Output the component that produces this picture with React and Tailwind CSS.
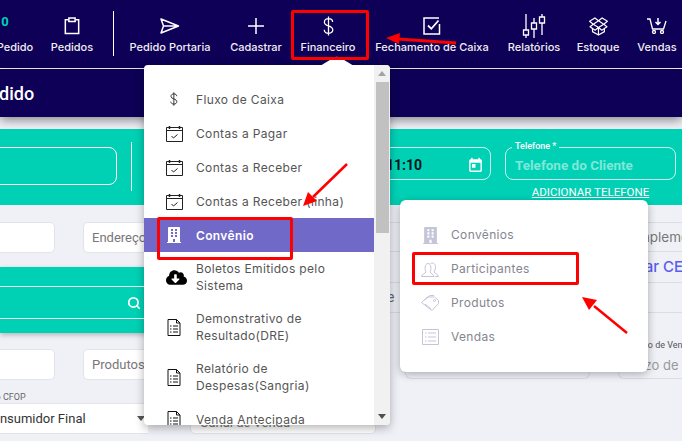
import { Search } from "lucide-react"
import { FaBuilding, FaCloudDownloadAlt } from "react-icons/fa"
import { MdToday } from "react-icons/md"
import { SlSocialDropbox } from "react-icons/sl"

const poppins = "font-['Inter',sans-serif]"

function ClipboardIcon() {
  return (
    <svg width="16" height="18" viewBox="0 0 18 20" fill="none" stroke="white" strokeWidth="1.7">
      <path d="M5 3H1.500v15.500h15V3H13" />
      <path d="M5.500 1h7v4h-7z" />
    </svg>
  )
}

function SendIcon() {
  return (
    <svg width="20" height="16" viewBox="0 0 20 16" fill="none" stroke="white" strokeWidth="1.5">
      <path d="M1 1l17.500 7L1 15l2.500-7zM3.500 8h15" strokeLinejoin="round" />
    </svg>
  )
}

function PlusIcon() {
  return (
    <svg width="18" height="18" viewBox="0 0 18 18" stroke="white" strokeWidth="1.5">
      <path d="M9 1v16M1 9h16" />
    </svg>
  )
}

function DollarIcon({ color = "white", size = 20 }) {
  return (
    <svg width={size * 0.55} height={size} viewBox="0 0 12 22" fill="none" stroke={color} strokeWidth="1.4">
      <path d="M6 0.500v21M10.500 6.500C10.500 4 8.500 3 6 3S1.500 4.300 1.500 6.800C1.500 12 10.700 9.800 10.700 15.200 10.700 17.800 8.500 19 6 19S1.300 17.800 1.300 15.200" />
    </svg>
  )
}

function CheckSquareIcon() {
  return (
    <svg width="18" height="18" viewBox="0 0 18 18" fill="none" stroke="white">
      <path d="M16.500 7v10H1V1h15" strokeWidth="1.500" />
      <path d="M5 8.500l3.300 3.300L15.500 3.500" strokeWidth="1.800" />
    </svg>
  )
}

function SlidersIcon() {
  return (
    <svg width="24" height="24" viewBox="0 0 24 24" fill="none" stroke="white" strokeWidth="1.300">
      <path d="M4 0v16M4 21v3M12 4v5M12 15v9M20 0v3M20 9v12" />
      <path d="M1.500 16h5v5h-5zM9.500 9h5v6h-5zM17.500 3h5v6h-5z" />
    </svg>
  )
}

function CartIcon() {
  return (
    <svg width="20" height="16" viewBox="0 0 20 16" fill="none" stroke="white" strokeWidth="1.300">
      <path d="M0 1h3l2.500 10h11L19 3" />
      <path d="M11 0v6M8.500 4l2.500 2.500L13.500 4" strokeWidth="1.500" />
      <circle cx="7" cy="14" r="1.500" />
      <circle cx="15" cy="14" r="1.500" />
    </svg>
  )
}

function CalendarCheckIcon() {
  return (
    <svg width="17" height="17" viewBox="0 0 17 17" fill="none" stroke="#222" strokeWidth="1">
      <path d="M0.500 2.500h16v14H0.500zM0.500 5.500h16" />
      <path d="M3.500 1v3M13.500 1v3" strokeWidth="1.500" />
      <path d="M5.500 11l2 2 4-3.500" />
    </svg>
  )
}

function DocListIcon() {
  return (
    <svg width="14" height="17" viewBox="0 0 14 17" fill="none" stroke="#111" strokeWidth="1">
      <path d="M1 0.500h8.500l3.500 3.500v12.500H1z" />
      <path d="M9.500 0.500v3.500H13" />
      <path d="M3 7h1.500M6 7h5M3 10h1.500M6 10h5M3 13h1.500M6 13h5" strokeWidth="1.200" />
    </svg>
  )
}

function PeopleIcon() {
  return (
    <svg width="18" height="15" viewBox="0 0 18 15" fill="none" stroke="#c5c5d8" strokeWidth="1">
      <path d="M0.500 14.500c0-2.500 4-3 4.500-4.500C3.500 8 3.500 1.500 7 1.500S10.500 8 9 10c.5 1.500 3.500 2 4 4.500z" />
      <path d="M9.500 1.500c3-1.500 5.500 1 5 4.500-.2 1.600-1 3-1.500 4 .5 1.500 4 2 4.500 4.500H14" />
    </svg>
  )
}

function TagIcon() {
  return (
    <svg width="18" height="16" viewBox="0 0 18 16" fill="none" stroke="#c5c5d8" strokeWidth="1">
      <path d="M0.500 7.500L6.500 2h7l4 3.500v3L11 15.500z" />
      <path d="M3.500 5L9 0.500h4M4 9l6 5" />
      <circle cx="13.500" cy="5.500" r="1" />
    </svg>
  )
}

function ListBoxIcon() {
  return (
    <svg width="17" height="16" viewBox="0 0 17 16" fill="none" stroke="#c5c5d8" strokeWidth="1">
      <path d="M0.500 0.500h16v15H0.500z" />
      <path d="M3 4h1.500M6 4h8M3 8h1.500M6 8h8M3 12h1.500M6 12h8" />
    </svg>
  )
}

function NavItem({ icon, label, width }) {
  return (
    <div className={`flex flex-col items-center shrink-0 ${width}`}>
      <div className="h-[24px] flex items-center justify-center">{icon}</div>
      <span className={`mt-[1px] text-[11px] leading-[16px] whitespace-nowrap font-medium text-[#f1eef0] ${poppins}`}>{label}</span>
    </div>
  )
}

function MenuItem({ icon, lines, active }) {
  return (
    <div className={`flex items-center pl-[16px] ${active ? "bg-[#7069c7] text-white font-semibold" : "text-[#555]"} ${lines.length > 1 ? "h-[50px]" : "h-[34px]"}`}>
      <div className="w-[28px] flex justify-center shrink-0">{icon}</div>
      <div className={`ml-[8px] text-[12px] leading-[17px] tracking-[0.35px] ${poppins}`}>
        {lines.map((line) => (
          <div key={line} className="whitespace-nowrap">{line}</div>
        ))}
      </div>
    </div>
  )
}

function SubItem({ icon, label }) {
  return (
    <div className="h-[34px] flex items-center pl-[20px]">
      <div className="w-[20px] flex justify-center shrink-0">{icon}</div>
      <span className={`ml-[11px] text-[12px] tracking-[0.35px] text-[#85858f] ${poppins}`}>{label}</span>
    </div>
  )
}

function Field({ className, children }) {
  return (
    <div className={`h-[31px] bg-white border border-[#e3e3ea] rounded-[5px] flex items-center px-[8px] whitespace-nowrap overflow-hidden shrink-0 ${className}`}>
      {children}
    </div>
  )
}

function App() {
  return (
    <div className="relative w-[682px] h-[441px] overflow-hidden bg-[#f0f1f7] font-['Roboto',sans-serif]">

      {/* TOP NAV */}
      <div className="h-[69px] bg-[#0d0056] border-b border-white flex pt-[14px] relative">
        <div className="flex ml-[-15px]">
          <NavItem
            width="w-[60px]"
            label="Pedido"
            icon={<span className="text-[#00d1b5] text-[13px] font-bold translate-x-[-10px] translate-y-[-4px]">0</span>}
          />
          <NavItem width="w-[54px]" label="Pedidos" icon={<ClipboardIcon />} />
          <div className="w-[28px] flex justify-center shrink-0 -mt-[3px]">
            <div className="w-px h-[45px] bg-white" />
          </div>
          <NavItem width="w-[86px]" label="Pedido Portaria" icon={<SendIcon />} />
          <NavItem width="w-[86px]" label="Cadastrar" icon={<PlusIcon />} />
          <NavItem width="w-[58px]" label="Financeiro" icon={<DollarIcon />} />
          <NavItem width="w-[150px]" label="Fechamento de Caixa" icon={<CheckSquareIcon />} />
          <NavItem width="w-[54px]" label="Relatórios" icon={<SlidersIcon />} />
          <NavItem width="w-[74px]" label="Estoque" icon={<SlSocialDropbox className="text-white" size={19} />} />
          <NavItem width="w-[44px]" label="Vendas" icon={<CartIcon />} />
        </div>
      </div>

      {/* TITLE BAR */}
      <div className="relative z-10 h-[48px] bg-[#0d0056] flex items-center shadow-[0_3px_10px_rgba(0,0,0,0.45)]">
        <span className="ml-[-22px] text-[18px] font-medium text-white">Pedido</span>
      </div>

      {/* TEAL HEADER */}
      <div className="mt-[12px] h-[76px] bg-[#00d1b5] flex items-start relative">
        <div className="mt-[18px] ml-[-20px] w-[137px] h-[38px] border border-white rounded-[8px] shrink-0" />
        <div className="mt-[13px] ml-[14px] w-px h-[49px] bg-white shrink-0" />
        <div className="mt-[18px] ml-[13px] w-[346px] h-[33px] border border-white/80 rounded-[8px] shrink-0 flex items-center justify-end pr-[6px] pt-[3px]">
          <span className="text-[14px] font-bold text-[#07151a] mr-[45px]">11:10</span>
          <MdToday className="text-white" size={17} />
        </div>
        <div className="ml-[14px] shrink-0 flex flex-col items-center">
          <div className="mt-[18px] w-[171px] h-[33px] border border-white/80 rounded-[8px] flex items-center pl-[9px] pt-[3px] relative">
            <span className="absolute -top-[8px] left-[6px] px-[3px] bg-[#00d1b5] text-[9px] leading-[12px] font-medium text-white">Telefone *</span>
            <span className="text-[13.500px] font-bold text-[#7fe8da]">Telefone do Cliente</span>
          </div>
          <span className="mt-[5px] text-[11.500px] leading-[14px] text-white underline">ADICIONAR TELEFONE</span>
        </div>
      </div>

      {/* BODY */}
      <div className="flex mt-[17px]">

        {/* LEFT COLUMN */}
        <div className="w-[376px] shrink-0">
          <div className="flex">
            <Field className="ml-[-30px] w-[85px]" />
            <Field className="ml-[28px] w-[250px] text-[13px] text-[#777]">Endereço</Field>
          </div>

          <div className="mt-[14px] h-[66px] bg-[#00d1b5] pt-[19px] shadow-[0_2px_5px_rgba(0,0,0,0.25)]">
            <div className="h-[33px] border-y border-white/90 flex items-center pl-[127px]">
              <Search className="text-white" size={14} strokeWidth={3} />
            </div>
          </div>

          <div className="flex mt-[16px]">
            <Field className="ml-[-30px] w-[85px]" />
            <Field className="ml-[28px] w-[250px] text-[13px] text-[#777]">Produtos</Field>
          </div>

          <div className="flex mt-[23px]">
            <div className="relative shrink-0">
              <span className="absolute -top-[11px] left-[-17px] text-[9px] leading-[10px] text-[#666] whitespace-nowrap">Tipo CFOP</span>
              <Field className="ml-[-26px] w-[174px] rounded-none border-x-0 pl-[10px] text-[13px] text-[#333]">Consumidor Final</Field>
              <svg className="absolute right-[3px] top-[13px]" width="8" height="5" viewBox="0 0 8 5"><path d="M0 0h8L4 5z" fill="#555" /></svg>
            </div>
            <Field className="ml-[42px] w-[186px] pt-[8px] pl-[9px] text-[13px] text-[#777]">Canal de Venda</Field>
          </div>
        </div>

        {/* RIGHT COLUMN */}
        <div className="flex-1 min-w-0">
          <div className={`ml-[4px] h-[30px] border-y border-[#dcdce4] flex items-center whitespace-nowrap overflow-hidden text-[13.500px] text-[#777] ${poppins}`}>
            <span className="ml-[240px]">Complemento</span>
          </div>
          <div className={`ml-[4px] h-[31px] border-b border-[#dcdce4] flex items-center whitespace-nowrap overflow-hidden text-[15px] font-medium text-[#5a5cf0] ${poppins}`}>
            <span className="ml-[229px]">Buscar CEP</span>
          </div>
          <div className="ml-[4px] h-[30px] border-b border-[#dcdce4] flex items-center text-[14px] text-[#667] overflow-hidden relative">
            <span className="ml-[7px]">e</span>
            <span className="ml-[250px] w-[2px] h-[5px] bg-[#5a5cf0]/70" />
          </div>
          <div className="flex">
            <div className="ml-[29px] w-[185px] h-[66px] border-b border-x border-[#dcdce4] rounded-b-[6px] shrink-0" />
            <div className="ml-[28px] flex-1 h-[66px] border-b border-l border-[#dcdce4] rounded-bl-[6px] pl-[5px] pt-[27px] whitespace-nowrap overflow-hidden text-[#999]">
              <div className="ml-[6px] text-[9px] leading-[10px] text-[#555]">Prazo de Venda</div>
              <div className={`mt-[5px] text-[13px] leading-[20px] ${poppins}`}>Prazo de Venda</div>
            </div>
          </div>
        </div>
      </div>

      {/* FINANCEIRO DROPDOWN */}
      <div className="absolute left-[144px] top-[65px] w-[246px] h-[360px] bg-white rounded-[4px] overflow-hidden shadow-[0_3px_10px_rgba(0,0,0,0.3)] flex z-20">
        <div className="flex-1 pt-[17px]">
          <MenuItem icon={<DollarIcon color="#222" size={14} />} lines={["Fluxo de Caixa"]} />
          <MenuItem icon={<CalendarCheckIcon />} lines={["Contas a Pagar"]} />
          <MenuItem icon={<CalendarCheckIcon />} lines={["Contas a Receber"]} />
          <MenuItem icon={<CalendarCheckIcon />} lines={["Contas a Receber (linha)"]} />
          <MenuItem icon={<FaBuilding className="text-white" size={16} />} lines={["Convênio"]} active />
          <MenuItem icon={<FaCloudDownloadAlt className="text-black ml-[5px]" size={21} />} lines={["Boletos Emitidos pelo", "Sistema"]} />
          <MenuItem icon={<DocListIcon />} lines={["Demonstrativo de", "Resultado(DRE)"]} />
          <MenuItem icon={<DocListIcon />} lines={["Relatório de", "Despesas(Sangria)"]} />
          <MenuItem icon={<DocListIcon />} lines={["Venda Antecipada"]} />
        </div>
        <div className="w-[16px] bg-[#f1f1f1] flex flex-col items-center shrink-0 relative">
          <svg className="mt-[6px]" width="8" height="5" viewBox="0 0 8 5"><path d="M0 5h8L4 0z" fill="#a3a3a3" /></svg>
          <div className="mt-[6px] w-[13px] h-[151px] bg-[#c1c1c1]" />
          <svg className="absolute bottom-[6px]" width="8" height="5" viewBox="0 0 8 5"><path d="M0 0h8L4 5z" fill="#505050" /></svg>
        </div>
      </div>

      {/* CARET UNDER FINANCEIRO */}
      <svg className="absolute left-[318px] top-[56px] z-20" width="38" height="10" viewBox="0 0 38 10">
        <path d="M2 10L16 1.500Q19 0 22 1.500L36 10z" fill="white" />
      </svg>

      {/* CONVENIO SUBMENU */}
      <div className="absolute left-[400px] top-[200px] w-[248px] h-[172px] bg-white rounded-[6px] shadow-[0_2px_8px_rgba(0,0,0,0.3)] pt-[18px] z-20">
        <SubItem icon={<FaBuilding className="text-[#c5c5d8]" size={17} />} label="Convênios" />
        <SubItem icon={<PeopleIcon />} label="Participantes" />
        <SubItem icon={<TagIcon />} label="Produtos" />
        <SubItem icon={<ListBoxIcon />} label="Vendas" />
      </div>

      {/* RED ANNOTATIONS */}
      <div className="absolute left-[291px] top-[10px] w-[78px] h-[50px] border-[3px] border-[#ff0000] rounded-[2px] z-30" />
      <div className="absolute left-[157px] top-[217px] w-[136px] h-[43px] border-[3px] border-[#ff0000] rounded-[2px] z-30" />
      <div className="absolute left-[412px] top-[252px] w-[167px] h-[33px] border-[3px] border-[#ff0000] rounded-[2px] z-30" />
      <svg className="absolute left-0 top-0 z-30" width="682" height="441" viewBox="0 0 682 441" fill="none">
        <path d="M456 43L398 39" stroke="#f00" strokeWidth="3" />
        <path d="M386 38l14-5-1 11z" fill="#f00" />
        <path d="M347 164L313 197" stroke="#f00" strokeWidth="2.500" />
        <path d="M303 206l5-14 9 9z" fill="#f00" />
        <path d="M627 333L594 306" stroke="#f00" strokeWidth="2.500" />
        <path d="M582 297l15 3-8 10z" fill="#f00" />
      </svg>

    </div>
  )
}

export default App
